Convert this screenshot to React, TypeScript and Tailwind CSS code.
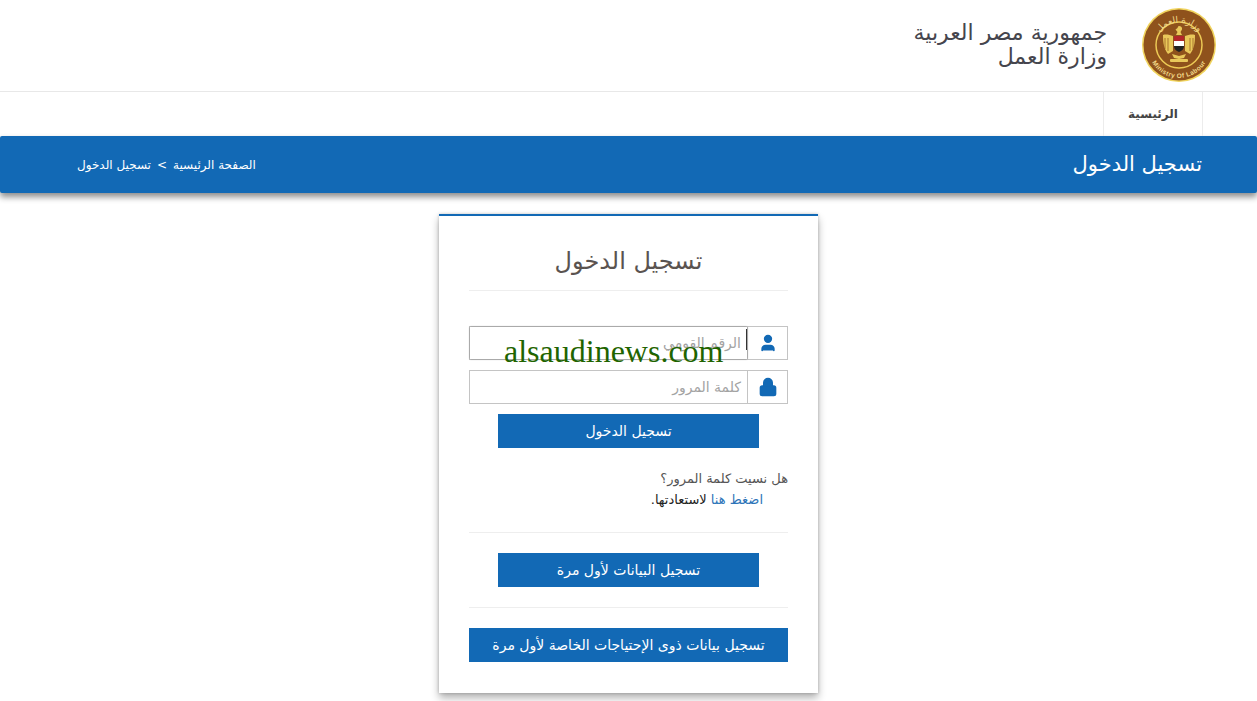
import { Lock, User } from 'lucide-react';

function MinistryLogo() {
  return (
    <svg width="76" height="76" viewBox="0 0 76 76" className="shrink-0">
      <defs>
        <path id="logo-top" d="M16 30 A24 24 0 0 1 60 30" />
        <path id="logo-bottom" d="M7 40 A31 31 0 0 0 69 40" />
      </defs>
      <circle cx="38" cy="38" r="37" fill="#f0d35c" />
      <circle cx="38" cy="38" r="35.5" fill="#8f521c" />
      <circle cx="38" cy="38" r="23" fill="none" stroke="#edca55" strokeWidth="1.5" />
      <text fontSize="9" fill="#f2d98a" fontFamily="'DejaVu Sans', sans-serif" direction="rtl">
        <textPath href="#logo-top" startOffset="50%" textAnchor="middle">وزارة العمل</textPath>
      </text>
      <text fontSize="6.5" fontWeight="700" fill="#f2d98a" fontFamily="'Liberation Sans', sans-serif" letterSpacing="0.4">
        <textPath href="#logo-bottom" startOffset="50%" textAnchor="middle">Ministry Of Labour</textPath>
      </text>
      {/* eagle */}
      <path d="M38 19c2 0 3.500 1.500 3 3.500l-1.500 2.500 1.500 3h-6l1.500-3-2-2.500 2-1.500c.5-1.500 1-2 1.500-2z" fill="#e9c85a" />
      <path d="M32 29c-3-1-7-2-10-1 0 8 1 14 5 19l5-3z" fill="#e9c85a" />
      <path d="M44 29c3-1 7-2 10-1 0 8-1 14-5 19l-5-3z" fill="#e9c85a" />
      <path d="M24 31v11M27 31v13M52 31v11M49 31v13" stroke="#8f521c" strokeWidth="0.7" />
      <rect x="33" y="29" width="10" height="5" fill="#b3262a" />
      <rect x="33" y="34" width="10" height="5" fill="#fff" />
      <path d="M33 39h10c0 3-2 5-5 6-3-1-5-3-5-6z" fill="#222" />
      <path d="M31 47l7 2 7-2-2 4-5 1-5-1z" fill="#e9c85a" />
      <rect x="29" y="52" width="18" height="3" rx="1" fill="#e9c85a" />
    </svg>
  );
}

const wideBtn = 'flex h-[34px] items-center justify-center bg-[#1269b5] text-[14px] text-white';

export default function App() {
  return (
    <div dir="rtl" className="h-[701px] overflow-hidden bg-white font-['DejaVu_Sans',sans-serif] text-[#4a4a4a]">
      <header className="flex h-[92px] items-center gap-[34px] border-b border-[#e8e8e8] pr-[40px] pb-[1px]">
        <MinistryLogo />
        <div className="text-[22px] leading-[24px] text-[#45454d]">
          <div>جمهورية مصر العربية</div>
          <div>وزارة العمل</div>
        </div>
      </header>

      <nav className="flex h-[44px] pr-[54px]">
        <a className="flex w-[100px] items-center justify-center border-x border-[#ececec] pb-[1px] text-[12px] font-bold text-[#444]">
          الرئيسية
        </a>
      </nav>

      <div className="flex h-[57px] items-center justify-between bg-[#1269b5] pr-[55px] pl-[77px] text-white shadow-[0_4px_6px_rgba(0,0,0,0.45)] rounded-[2px]">
        <h1 className="text-[21px] font-normal">تسجيل الدخول</h1>
        <div className="flex gap-[6px] text-[12px]">
          <span>الصفحة الرئيسية</span>
          <span>&gt;</span>
          <span>تسجيل الدخول</span>
        </div>
      </div>

      <main className="flex justify-center pt-[21px]">
        <div className="h-[479px] w-[379px] border-t-2 border-[#1269b5] bg-white px-[30px] shadow-[0_0_3px_rgba(0,0,0,0.2),0_5px_8px_rgba(0,0,0,0.3)]">
          <h2 className="flex h-[75px] items-center justify-center border-b border-[#eeeeee] pt-[15px] text-[24px] font-normal text-[#5a5350]">
            تسجيل الدخول
          </h2>

          <div className="relative mt-[35px] flex h-[34px] border border-[#c4c4c4]">
            <div className="flex w-[40px] items-center justify-center border-l border-[#c4c4c4]">
              <User size={20} fill="#1269b5" stroke="#1269b5" />
            </div>
            <div className="flex flex-1 items-center px-[6px] text-[14px] text-[#a3a3a3] shadow-[0_0_2px_rgba(0,0,0,0.4)]">الرقم القومي</div>
            <span className="absolute top-[2px] right-[40px] h-[21px] w-px bg-[#333]" />
            <span className="absolute top-[1px] left-[34px] font-['Comic_Sans_MS',cursive] text-[32px] leading-[46px] text-[#1f6400]" dir="ltr">
              alsaudinews.com
            </span>
          </div>

          <div className="mt-[10px] flex h-[34px] border border-[#c4c4c4]">
            <div className="flex w-[40px] items-center justify-center border-l border-[#c4c4c4]">
              <Lock size={20} fill="#1269b5" stroke="#1269b5" />
            </div>
            <div className="flex flex-1 items-center px-[6px] text-[14px] text-[#a3a3a3]">كلمة المرور</div>
          </div>

          <div className={`${wideBtn} mx-[29px] mt-[10px]`}>تسجيل الدخول</div>

          <p className="mt-[20px] text-[13px] leading-[21px] text-[#555]">هل نسيت كلمة المرور؟</p>
          <p className="pr-[25px] text-[13px] leading-[21px] text-[#222]">
            <a className="text-[#2d74b8]">اضغط هنا</a> لاستعادتها.
          </p>

          <div className="mt-[22px] border-t border-[#eeeeee] pt-[20px] pb-[20px]">
            <div className={`${wideBtn} mx-[29px]`}>تسجيل البيانات لأول مرة</div>
          </div>
          <div className="border-t border-[#eeeeee] pt-[20px]">
            <div className={wideBtn}>تسجيل بيانات ذوى الإحتياجات الخاصة لأول مرة</div>
          </div>
        </div>
      </main>
    </div>
  );
}
